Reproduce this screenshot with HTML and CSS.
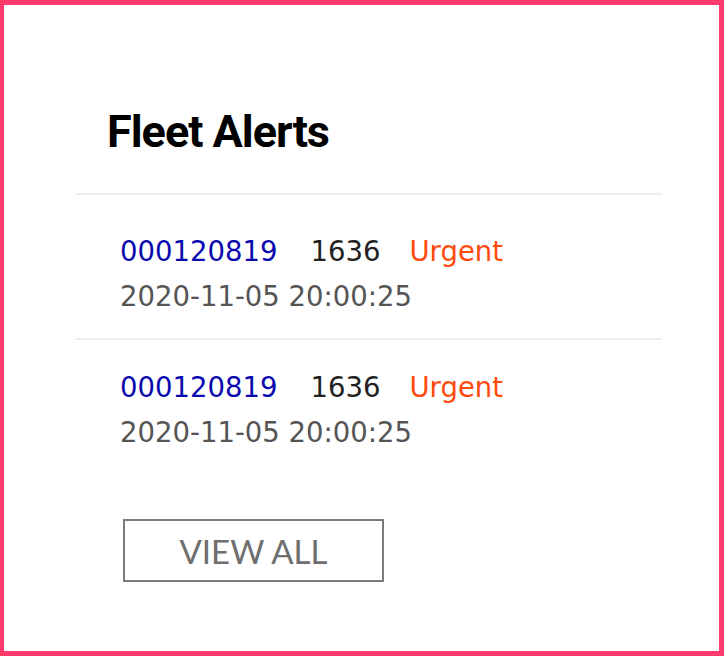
FILE: index.html
```html
<!DOCTYPE html>
<html>
<head>
<meta charset="utf-8">
<link rel="stylesheet" href="styles.css">
</head>
<body>
<div class="frame">
  <div class="card">
    <h2 class="title">Fleet Alerts</h2>
    <div class="list">
      <div class="alert">
        <div class="alert-top">
          <span class="alert-id">000120819</span>
          <span class="alert-code">1636</span>
          <span class="alert-level">Urgent</span>
        </div>
        <div class="alert-time">2020-11-05 20:00:25</div>
      </div>
      <div class="alert">
        <div class="alert-top">
          <span class="alert-id">000120819</span>
          <span class="alert-code">1636</span>
          <span class="alert-level">Urgent</span>
        </div>
        <div class="alert-time">2020-11-05 20:00:25</div>
      </div>
    </div>
    <button class="view-all">VIEW ALL</button>
  </div>
</div>
</body>
</html>
```

FILE: styles.css
```css
* { box-sizing: border-box; }
html, body { margin: 0; padding: 0; background: #fff; }
.frame {
  width: 724px;
  height: 656px;
  border: 5px solid #ff3a6d;
  border-left-width: 4px;
  border-right-width: 5px;
  background: #fff;
  font-family: Roboto, "Liberation Sans", sans-serif;
}
.card {
  padding: 102px 0 0 71px;
}
.title {
  margin: 0 0 0 32px;
  font-size: 45px;
  font-weight: 700;
  letter-spacing: -1px;
  color: #000;
  line-height: 50px;
}
.list {
  margin-top: 36px;
  width: 587px;
  border-top: 2px solid #eeeeee;
}
.alert {
  padding: 34px 0 19px 45px;
  font-family: "DejaVu Sans", Roboto, sans-serif;
}
.alert + .alert {
  border-top: 2px solid #eeeeee;
  padding-top: 25px;
}
.alert-top {
  display: flex;
  font-size: 27.5px;
  line-height: 45px;
}
.alert-id { color: #0a0aae; }
.alert-code { color: #222; margin-left: 33px; }
.alert-level { color: #ff4a0d; margin-left: 29px; }
.alert-time {
  font-size: 27.5px;
  line-height: 45px;
  color: #555;
}
.view-all {
  display: block;
  margin: 45px 0 0 48px;
  width: 261px;
  height: 63px;
  border: 2px solid #7a7a7a;
  background: #fff;
  color: #6e6e6e;
  font-family: Lato, "Open Sans", sans-serif;
  font-size: 33px;
  font-weight: 400;
  padding: 0;
}
```
